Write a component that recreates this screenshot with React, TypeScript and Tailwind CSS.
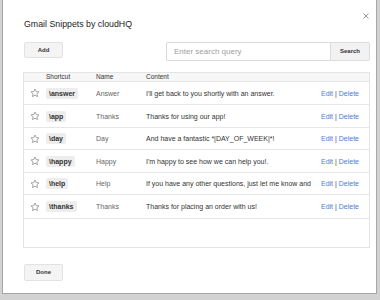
import React from "react";

const rows = [
  { sc: "\\answer", name: "Answer", content: "I'll get back to you shortly with an answer.", h: "h-[23px]" },
  { sc: "\\app", name: "Thanks", content: "Thanks for using our app!", h: "h-[23px]" },
  { sc: "\\day", name: "Day", content: "And have a fantastic *|DAY_OF_WEEK|*!", h: "h-[22px]" },
  { sc: "\\happy", name: "Happy", content: "I'm happy to see how we can help you!.", h: "h-[23px]" },
  { sc: "\\help", name: "Help", content: "If you have any other questions, just let me know and", h: "h-[22px]" },
  { sc: "\\thanks", name: "Thanks", content: "Thanks for placing an order with us!", h: "h-[24px]" },
];

function Star() {
  return (
    <svg width="10" height="10" viewBox="0 0 24 24" fill="none" stroke="#7a7a7a" strokeWidth="1.6" strokeLinejoin="round">
      <path d="M12 2.5l2.9 6.1 6.6.8-4.9 4.6 1.3 6.6L12 17.3l-5.9 3.3 1.3-6.6-4.9-4.6 6.6-.8z" />
    </svg>
  );
}

export default function App() {
  return (
    <div
      className="w-[380px] h-[300px] bg-[#d2d2d2] overflow-hidden"
      style={{ fontFamily: '"Liberation Sans", Arial, sans-serif' }}
    >
      <div className="relative ml-[2px] w-[375px] h-[294px] bg-white border-x border-b border-[#a6a6a6] pl-[21px] pr-[6px] flex flex-col">
        <div className="absolute top-[13px] right-[7px]">
          <svg width="6" height="6" viewBox="0 0 6 6" stroke="#8a8a8a" strokeWidth="0.9">
            <path d="M0.5 0.5L5.5 5.5M5.5 0.5L0.5 5.5" />
          </svg>
        </div>
        <div className="mt-[19px] text-[8.8px] leading-[11px] text-[#222]">Gmail Snippets by cloudHQ</div>
        <div className="mt-[12px] flex justify-between items-start">
          <button className="w-[39px] h-[16px] rounded-[2px] border border-[#e2e2e2] bg-[#f4f4f4] text-[6px] font-bold text-[#333] flex items-center justify-center">
            Add
          </button>
          <div className="flex">
            <div className="w-[164px] h-[19px] border border-[#dadada] border-r-0 rounded-l-[2px] pl-[7px] flex items-center text-[8px] text-[#a0a0a0]">
              Enter search query
            </div>
            <button className="w-[40px] h-[19px] border border-[#dcdcdc] rounded-r-[2px] bg-[#f2f2f2] text-[6px] font-bold text-[#333] flex items-center justify-center">
              Search
            </button>
          </div>
        </div>
        <div className="mt-[11px] -ml-[1px] h-[176px] border border-[#e4e4e4] flex flex-col">
          <div className="h-[9px] bg-[#f7f7f7] border-b border-[#e4e4e4] grid grid-cols-[22px_50px_50px_175px_1fr] items-center text-[6.5px] leading-[8px] text-[#333]">
            <div />
            <div>Shortcut</div>
            <div>Name</div>
            <div>Content</div>
            <div />
          </div>
          {rows.map((r) => (
            <div
              key={r.sc}
              className={`${r.h} border-b border-[#e6e6e6] grid grid-cols-[22px_50px_50px_175px_1fr] items-center text-[7px] leading-[9px]`}
            >
              <div className="pl-[6px] flex items-center">
                <Star />
              </div>
              <div>
                <span className="inline-flex items-center h-[11px] px-[3px] bg-[#ededed] rounded-[2px] font-bold text-[#333]">
                  {r.sc}
                </span>
              </div>
              <div className="text-[#666]">{r.name}</div>
              <div className="mr-[6px] min-w-0 whitespace-nowrap text-[#333]">{r.content}</div>
              <div className="whitespace-nowrap">
                <span className="text-[#4a7dd6]">Edit</span>
                <span className="text-[#444]"> | </span>
                <span className="text-[#4a7dd6]">Delete</span>
              </div>
            </div>
          ))}
        </div>
        <div className="mt-[16px]">
          <button className="w-[39px] h-[17px] rounded-[2px] border border-[#e2e2e2] bg-[#f4f4f4] text-[6px] font-bold text-[#333] flex items-center justify-center">
            Done
          </button>
        </div>
      </div>
    </div>
  );
}
